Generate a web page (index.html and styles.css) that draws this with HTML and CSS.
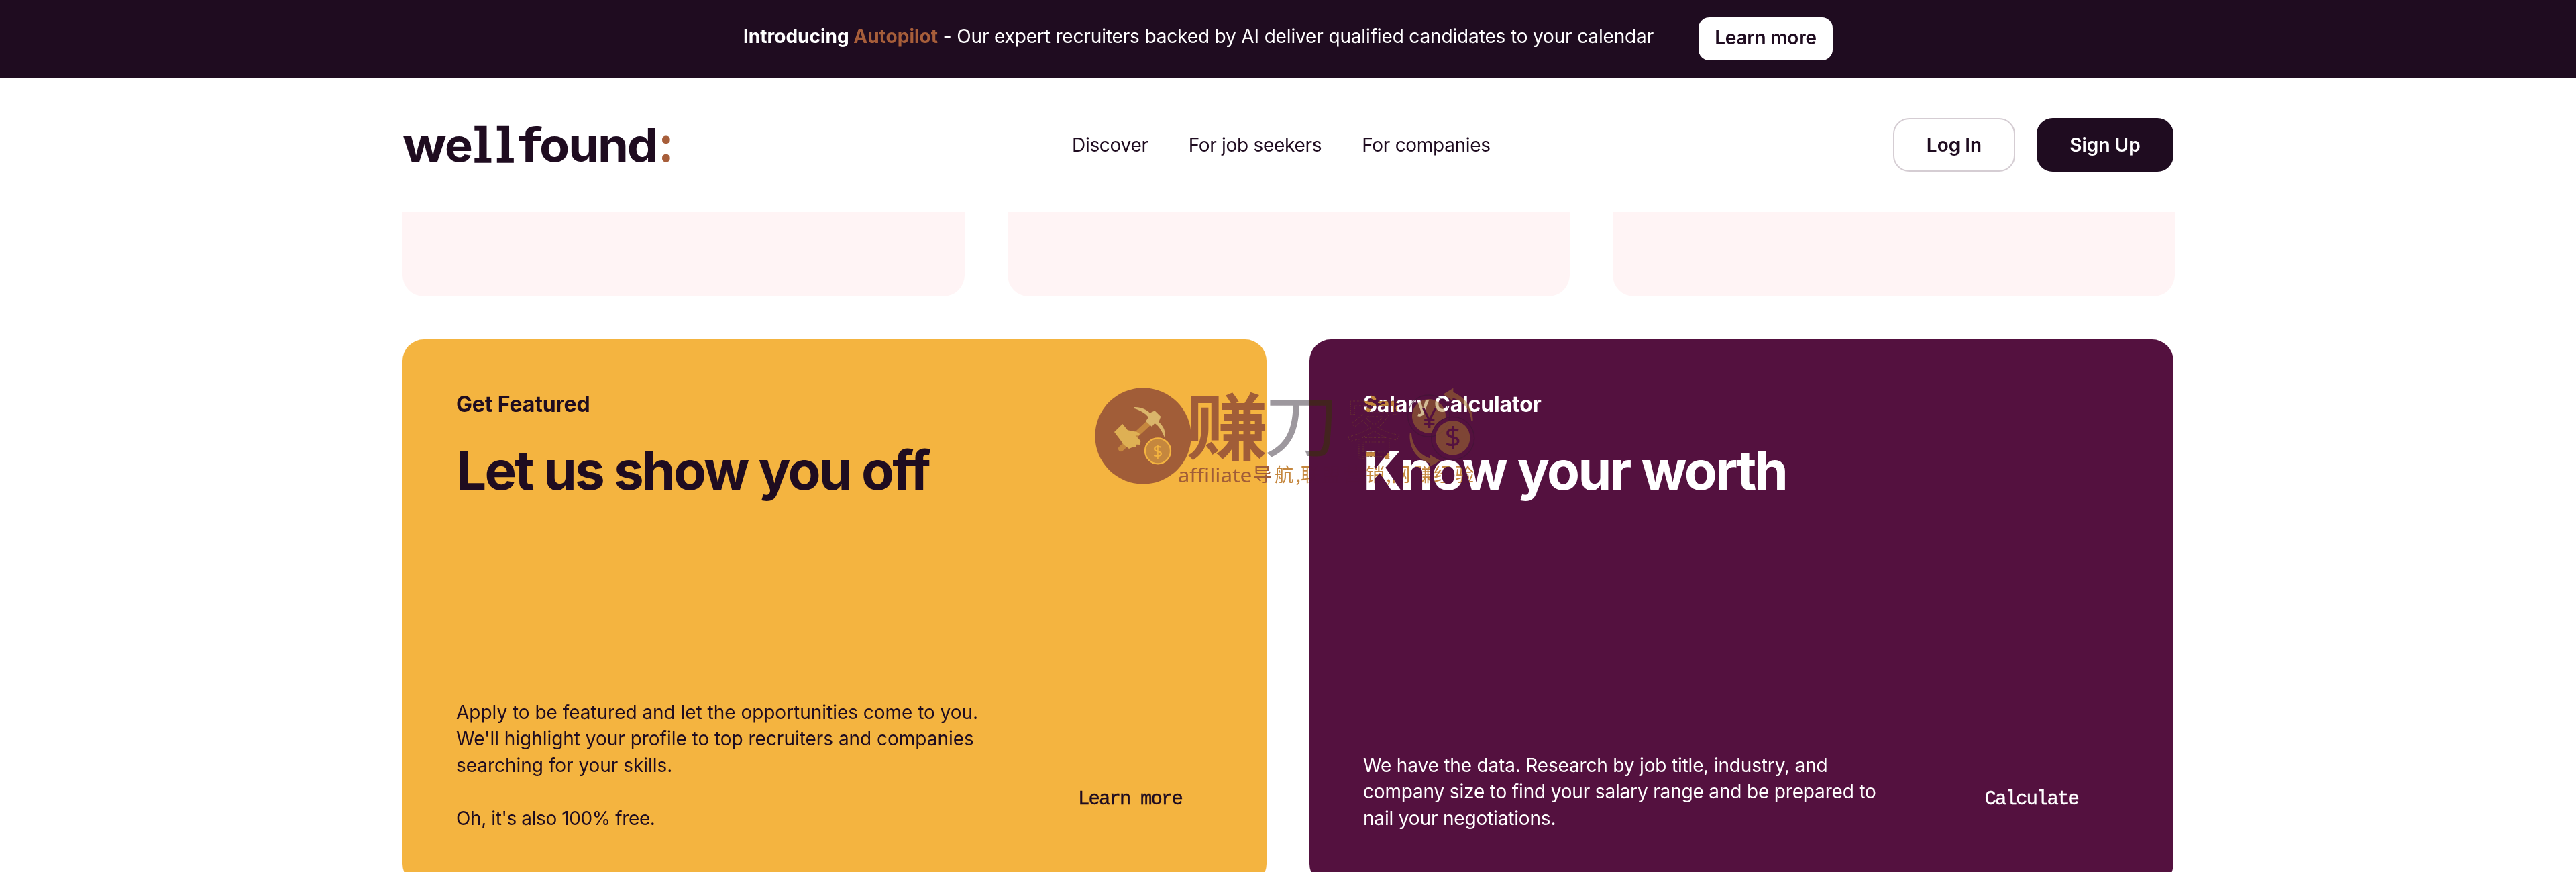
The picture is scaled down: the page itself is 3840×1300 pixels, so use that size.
FILE: index.html
```
<!DOCTYPE html>
<html lang="en">
<head>
    <meta charset="utf-8">
    <title>wellfound:</title>
    <link rel="stylesheet" href="styles.css">
</head>
<body>
    <div class="banner">
        <p class="banner-text"><b>Introducing <span class="accent">Autopilot</span></b> - Our expert recruiters backed by AI deliver qualified candidates to your calendar</p>
        <a class="banner-button">Learn more</a>
    </div>

    <header class="header">
        <a class="logo"><span class="logo-w">w</span><span class="logo-e">e</span><span class="logo-slab">ll</span><span class="logo-f">f</span><span class="logo-end">ound</span><span class="logo-colon">:</span></a>
        <nav class="nav">
            <a>Discover</a>
            <a>For job seekers</a>
            <a>For companies</a>
        </nav>
        <div class="actions">
            <a class="button button-light">Log In</a>
            <a class="button button-dark">Sign Up</a>
        </div>
    </header>

    <main class="content">
        <div class="tiles">
            <div class="tile"></div>
            <div class="tile"></div>
            <div class="tile"></div>
        </div>
        <div class="cards">
            <section class="card card-featured">
                <h3>Get Featured</h3>
                <h2>Let us show you off</h2>
                <div class="card-bottom">
                    <p>Apply to be featured and let the opportunities come to you.<br>We'll highlight your profile to top recruiters and companies<br>searching for your skills.<br><br><span class="free">Oh, it's also 100% free.</span></p>
                    <a class="card-link">Learn more</a>
                </div>
            </section>
            <section class="card card-salary">
                <h3>Salary Calculator</h3>
                <h2>Know your worth</h2>
                <div class="card-bottom">
                    <p>We have the data. Research by job title, industry, and<br>company size to find your salary range and be prepared to<br>nail your negotiations.</p>
                    <a class="card-link">Calculate</a>
                </div>
            </section>
        </div>
    </main>

    <!-- watermark: text that only darkens what is under it -->
    <svg class="watermark watermark-text" viewBox="0 0 1800 510">
        <text class="wm-line wm-brown" x="392" y="446" textLength="332" lengthAdjust="spacingAndGlyphs">affiliate</text>
        <text class="wm-line wm-cjk wm-brown" x="728" y="443">导</text>
        <text class="wm-line wm-cjk wm-orange" x="825 918 942 1036 1132 1232 1322 1348 1448 1536 1632" y="443">航,联盟营销,网赚经验</text>
        <text class="wm-big wm-orange" x="1146" y="317" textLength="246" lengthAdjust="spacingAndGlyphs">客</text>
    </svg>
    <svg class="watermark" viewBox="0 0 1800 510">
        <defs>
            <linearGradient id="blade" gradientUnits="userSpaceOnUse" x1="0" y1="0" x2="1800" y2="0">
                <stop offset="0.545" stop-color="#9d989e"/>
                <stop offset="0.545" stop-color="#43231f"/>
            </linearGradient>
        </defs>
        <circle cx="237" cy="240" r="215" fill="#a15d38"/>
        <!-- pickaxe -->
        <path d="M138 297L262 182" stroke="#c5873e" stroke-width="25" stroke-linecap="round"/>
        <path d="M195 111C225 109 252 120 267 137L289 127L316 153L307 177C328 196 341 222 334 250C324 222 308 195 289 183L276 198L249 174L261 156C246 136 222 124 195 116Z" fill="#dab56b"/>
        <path d="M108 222L145 186L168 214L208 221L222 230L219 238L203 238L226 262L224 279L208 278L205 291L188 291L174 297L150 279L136 259Z" fill="#deb054"/>
        <circle cx="303" cy="307" r="57" fill="#c5873e" stroke="#f4b440" stroke-width="7"/>
        <text class="wm-sign" x="303" y="335" font-size="78" fill="#f4b440">$</text>
        <!-- big characters -->
        <text class="wm-big wm-bold wm-brown" x="429" y="321" textLength="368" lengthAdjust="spacingAndGlyphs">赚</text>
        <text class="wm-big" x="776" y="309" textLength="338" lengthAdjust="spacingAndGlyphs" fill="url(#blade)">刀</text>
        <text class="wm-big wm-outline" x="1146" y="317" textLength="246" lengthAdjust="spacingAndGlyphs">客</text>
        <!-- coins -->
        <g fill="none" stroke="#3d1533" stroke-opacity="0.6" stroke-width="4">
            <circle cx="1514" cy="150" r="93"/>
            <circle cx="1622" cy="250" r="96"/>
        </g>
        <path d="M1514 75a76 76 0 1 0 14 151a97 97 0 0 1 62-68a76 76 0 0 0-76-83Z" fill="#a87a2c" fill-opacity="0.5"/>
        <circle cx="1622" cy="248" r="77" fill="#a87a2c" fill-opacity="0.5"/>
        <text class="wm-sign" x="1517" y="205" font-size="118" fill="#54113f">¥</text>
        <text class="wm-sign" x="1622" y="292" font-size="128" fill="#54113f">$</text>
        <g fill="#a87a2c" fill-opacity="0.5">
            <path d="M1579 53L1624 26L1624 44C1680 68 1714 118 1712 174L1705 174C1702 128 1674 88 1622 69L1620 82Z"/>
            <path d="M1430 228L1437 228C1440 282 1472 322 1519 340L1520 325L1565 350L1521 376L1517 361C1462 345 1424 292 1430 228Z"/>
        </g>
    </svg>
</body>
</html>
```
FILE: styles.css
```
html,body{
    margin: 0;
    background-color: #fff;
}
body{
    position: relative;
    height: 1300px;
    overflow: hidden;
    color: #1f0c20;
    font-family: Inter, "Liberation Sans", sans-serif;
    font-size: 28px;
}
p,h2,h3{
    margin: 0;
}

/* banner */
.banner{
    display: flex;
    justify-content: center;
    align-items: center;
    gap: 67px;
    height: 116px;
    background-color: #1f0c20;
    color: #fff;
}
.banner-text{
    letter-spacing: -0.15px;
    padding-bottom: 8px;
}
.banner-text b{
    font-weight: 700;
    letter-spacing: 0;
}
.accent{
    color: #a75e3a;
}
.banner-button{
    width: 200px;
    height: 64px;
    border-radius: 16px;
    background-color: #fff;
    color: #1f0c20;
    font-weight: 600;
    line-height: 61px;
    letter-spacing: -0.2px;
    text-align: center;
}

/* header */
.header{
    display: grid;
    grid-template-columns: 998px 1fr auto;
    align-items: center;
    width: 2640px;
    height: 200px;
    margin: 0 auto;
}
.logo{
    display: flex;
    align-items: baseline;
    font-size: 69px;
    font-weight: 700;
    line-height: 80px;
    white-space: nowrap;
}
.logo span{
    transform-origin: 0 0;
}
.logo-w{
    width: 63px;
    transform: scaleX(1.12);
}
.logo-e{
    width: 44px;
    transform: scaleX(1.02);
}
.logo-slab{
    width: 66px;
    font-family: "DejaVu Serif", serif;
    font-size: 67px;
    font-weight: 400;
    letter-spacing: 6.5px;
    -webkit-text-stroke: 3.4px;
    transform: scaleX(1.2);
}
.logo-f{
    width: 31px;
    font-weight: 600;
    transform: scaleX(1.35);
}
.logo-end{
    width: 179px;
    letter-spacing: -2px;
    transform: scaleX(1.07);
}
.logo-colon{
    font-family: "Open Sans", sans-serif;
    color: #a75e3a;
}
.nav{
    display: flex;
    gap: 60px;
    letter-spacing: -0.3px;
}
.actions{
    display: flex;
    gap: 32px;
}
.button{
    box-sizing: border-box;
    height: 80px;
    border-radius: 24px;
    font-weight: 600;
    line-height: 80px;
    text-align: center;
}
.button-light{
    width: 182px;
    border: 2px solid #d5cdd3;
    line-height: 76px;
}
.button-dark{
    width: 204px;
    background-color: #1f0c20;
    color: #fff;
}

/* content */
.content{
    width: 2642px;
    margin: 0 auto 0 600px;
}
.tiles{
    display: grid;
    grid-template-columns: repeat(3, 1fr);
    gap: 64px;
}
.tile{
    height: 126px;
    border-radius: 0 0 32px 32px;
    background-color: #fff4f5;
}
.cards{
    display: flex;
    gap: 64px;
    margin-top: 64px;
}
.card{
    display: flex;
    flex-direction: column;
    box-sizing: border-box;
    width: 1288px;
    height: 814px;
    padding: 77px 80px 80px;
    border-radius: 32px;
}
.card-featured{
    background-color: #f4b440;
}
.card-salary{
    background-color: #54113f;
    color: #fff;
}
.card h3{
    font-size: 32px;
    font-weight: 700;
    line-height: 40px;
    letter-spacing: -0.15px;
}
.card h2{
    margin-top: 28px;
    font-size: 80px;
    font-weight: 700;
    line-height: 100px;
    letter-spacing: -2.8px;
}
.card-salary h2{
    letter-spacing: -2.5px;
}
.card-bottom{
    display: flex;
    justify-content: space-between;
    align-items: flex-end;
    margin-top: auto;
}
.card p{
    line-height: 39.5px;
    letter-spacing: -0.03px;
    white-space: nowrap;
}
.card .free{
    letter-spacing: -0.4px;
}
.card-salary p{
    letter-spacing: -0.17px;
}
.card-link{
    margin: 0 46px 32px 0;
    font-family: "Liberation Mono", monospace;
    font-size: 29px;
    line-height: 32px;
    letter-spacing: -1.9px;
    -webkit-text-stroke: 0.4px;
}
.card-salary .card-link{
    margin-right: 62px;
}

/* watermark */
.watermark{
    position: absolute;
    left: 1625px;
    top: 570px;
    width: 600px;
    height: 170px;
    pointer-events: none;
}
.watermark-text{
    mix-blend-mode: darken;
}
.wm-line{
    font: 88px "Noto Sans", sans-serif;
}
.wm-cjk{
    font: 85px "Noto Sans CJK SC", sans-serif;
}
.wm-big{
    font: 310px "Noto Sans CJK SC", sans-serif;
}
.wm-bold{
    font-weight: 700;
    font-size: 325px;
}
.wm-brown{
    fill: #a15d38;
}
.wm-orange{
    fill: #c5873e;
}
.wm-outline{
    fill: none;
    stroke: #6a3a2e;
    stroke-width: 3;
    stroke-dasharray: 3 5;
}
.wm-sign{
    font-family: "Noto Sans", sans-serif;
    text-anchor: middle;
}
```
